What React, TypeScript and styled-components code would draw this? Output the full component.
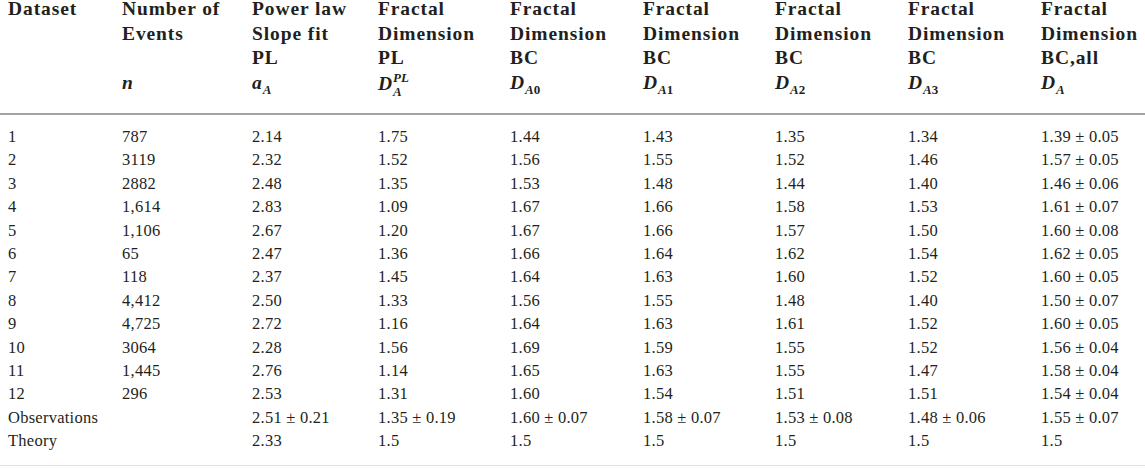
import React from 'react';
import styled, { createGlobalStyle } from 'styled-components';

const GlobalStyle = createGlobalStyle`
  html, body {
    margin: 0;
    padding: 0;
    background: #ffffff;
  }
  body {
    font-family: 'Liberation Serif', 'Times New Roman', serif;
    color: #231f20;
  }
`;

const COLUMNS = '114px 130px 126px 132px 133px 132px 133px 133px 1fr';

interface RowData {
    label: string,
    values: string[],
}

const rows: RowData[] = [
    { label: '1', values: ['787', '2.14', '1.75', '1.44', '1.43', '1.35', '1.34', '1.39 ± 0.05'] },
    { label: '2', values: ['3119', '2.32', '1.52', '1.56', '1.55', '1.52', '1.46', '1.57 ± 0.05'] },
    { label: '3', values: ['2882', '2.48', '1.35', '1.53', '1.48', '1.44', '1.40', '1.46 ± 0.06'] },
    { label: '4', values: ['1,614', '2.83', '1.09', '1.67', '1.66', '1.58', '1.53', '1.61 ± 0.07'] },
    { label: '5', values: ['1,106', '2.67', '1.20', '1.67', '1.66', '1.57', '1.50', '1.60 ± 0.08'] },
    { label: '6', values: ['65', '2.47', '1.36', '1.66', '1.64', '1.62', '1.54', '1.62 ± 0.05'] },
    { label: '7', values: ['118', '2.37', '1.45', '1.64', '1.63', '1.60', '1.52', '1.60 ± 0.05'] },
    { label: '8', values: ['4,412', '2.50', '1.33', '1.56', '1.55', '1.48', '1.40', '1.50 ± 0.07'] },
    { label: '9', values: ['4,725', '2.72', '1.16', '1.64', '1.63', '1.61', '1.52', '1.60 ± 0.05'] },
    { label: '10', values: ['3064', '2.28', '1.56', '1.69', '1.59', '1.55', '1.52', '1.56 ± 0.04'] },
    { label: '11', values: ['1,445', '2.76', '1.14', '1.65', '1.63', '1.55', '1.47', '1.58 ± 0.04'] },
    { label: '12', values: ['296', '2.53', '1.31', '1.60', '1.54', '1.51', '1.51', '1.54 ± 0.04'] },
    { label: 'Observations', values: ['', '2.51 ± 0.21', '1.35 ± 0.19', '1.60 ± 0.07', '1.58 ± 0.07', '1.53 ± 0.08', '1.48 ± 0.06', '1.55 ± 0.07'] },
    { label: 'Theory', values: ['', '2.33', '1.5', '1.5', '1.5', '1.5', '1.5', '1.5'] },
];

const Wrap = styled.div`
  width: 1145px;
`;

const HeadRow = styled.div`
  display: grid;
  grid-template-columns: ${COLUMNS};
  padding: 0 0 18px 8px;
  margin-top: -3px;
  border-bottom: 2px solid #a3a3a3;
`;

const HeadCell = styled.div`
  display: flex;
  flex-direction: column;
  font-weight: bold;
  font-size: 19.5px;
  letter-spacing: 0.9px;
  line-height: 24.5px;
  white-space: nowrap;
`;

const Line = styled.div`
  height: 24.5px;
`;

const Body = styled.div`
  padding: 10px 0 12px 0;
  border-bottom: 1px solid #e2e2e2;
`;

const Row = styled.div`
  display: grid;
  grid-template-columns: ${COLUMNS};
  padding-left: 8px;
  font-size: 16.5px;
  line-height: 23.4px;
  letter-spacing: 0.25px;
  white-space: nowrap;
`;

const Cell = styled.div``;

const Mi = styled.i`
  font-weight: bold;
  font-style: italic;
  letter-spacing: 0;
`;

const Sub = styled.span`
  font-size: 13px;
  vertical-align: -5px;
  letter-spacing: 0;
  margin-left: 1px;
`;

const SubI = styled.i`
  font-style: italic;
`;

const Stack = styled.span`
  display: inline-flex;
  flex-direction: column;
  vertical-align: 8px;
  font-size: 13px;
  line-height: 14px;
  font-style: italic;
  letter-spacing: 0;
  margin-left: 1px;
`;

const Sym = ({ sub }: { sub: React.ReactNode }) => (
    <span>
        <Mi>D</Mi>
        <Sub>{sub}</Sub>
    </span>
);

const heads: React.ReactNode[][] = [
    ['Dataset', '', '', ''],
    ['Number of', 'Events', '', <Mi>n</Mi>],
    ['Power law', 'Slope fit', 'PL', <span><Mi>a</Mi><Sub><SubI>A</SubI></Sub></span>],
    ['Fractal', 'Dimension', 'PL', <span><Mi>D</Mi><Stack><span>PL</span><span>A</span></Stack></span>],
    ['Fractal', 'Dimension', 'BC', <Sym sub={<><SubI>A</SubI>0</>} />],
    ['Fractal', 'Dimension', 'BC', <Sym sub={<><SubI>A</SubI>1</>} />],
    ['Fractal', 'Dimension', 'BC', <Sym sub={<><SubI>A</SubI>2</>} />],
    ['Fractal', 'Dimension', 'BC', <Sym sub={<><SubI>A</SubI>3</>} />],
    ['Fractal', 'Dimension', 'BC,all', <Sym sub={<SubI>A</SubI>} />],
];

const App = () => {
    return (
        <Wrap>
            <GlobalStyle />
            <HeadRow>
                {heads.map((lines, i) => (
                    <HeadCell key={i}>
                        {lines.map((l, j) => <Line key={j}>{l}</Line>)}
                    </HeadCell>
                ))}
            </HeadRow>
            <Body>
                {rows.map((row) => (
                    <Row key={row.label}>
                        <Cell>{row.label}</Cell>
                        {row.values.map((v, i) => <Cell key={i}>{v}</Cell>)}
                    </Row>
                ))}
            </Body>
        </Wrap>
    );
};

export default App;
